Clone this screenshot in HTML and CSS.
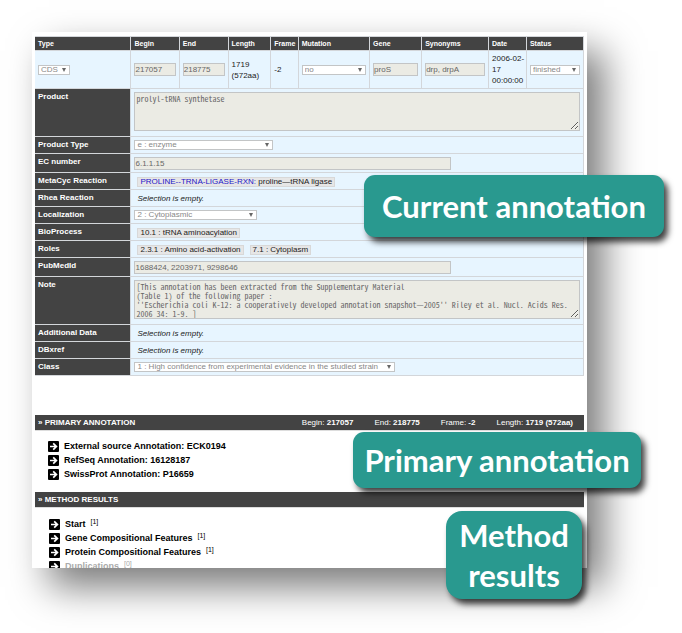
FILE: index.html
```html
<!DOCTYPE html>
<html lang="en">
<head>
<meta charset="utf-8">
<title>Gene annotation</title>
<link rel="stylesheet" href="styles.css">
</head>
<body>
<svg class="defs" aria-hidden="true">
  <symbol id="arrow" viewBox="0 0 11 11">
    <rect width="11" height="11" rx="1" fill="#000"/>
    <path d="M2 5.5H8M5.2 2.4L8.4 5.5L5.2 8.6" fill="none" stroke="#fff" stroke-width="1.7"/>
  </symbol>
</svg>
<div class="stage">
<main class="panel">
  <table class="annotation">
    <colgroup>
      <col class="c-type"><col class="c-begin"><col class="c-end"><col class="c-length"><col class="c-frame">
      <col class="c-mutation"><col class="c-gene"><col class="c-synonyms"><col class="c-date"><col class="c-status">
    </colgroup>
    <thead>
      <tr>
        <th><label for="type">Type</label></th><th><label for="begin">Begin</label></th><th><label for="end">End</label></th><th>Length</th><th>Frame</th>
        <th><label for="mutation">Mutation</label></th><th><label for="gene">Gene</label></th><th><label for="synonyms">Synonyms</label></th><th>Date</th><th><label for="status">Status</label></th>
      </tr>
    </thead>
    <tbody>
      <tr class="summary">
        <td><span class="pick pick-type"><select id="type"><option>CDS</option></select></span></td>
        <td><input id="begin" value="217057"></td>
        <td><input id="end" value="218775"></td>
        <td>1719 (572aa)</td>
        <td>-2</td>
        <td><span class="pick pick-full"><select id="mutation"><option>no</option></select></span></td>
        <td><input id="gene" value="proS"></td>
        <td><input id="synonyms" value="drp, drpA"></td>
        <td class="date">2006-02-17 00:00:00</td>
        <td><span class="pick pick-full"><select id="status"><option>finished</option></select></span></td>
      </tr>
      <tr class="tall"><th><label for="product">Product</label></th><td colspan="9"><textarea id="product">prolyl-tRNA synthetase</textarea></td></tr>
      <tr><th><label for="ptype">Product Type</label></th><td colspan="9"><span class="pick pick-ptype"><select id="ptype"><option>e : enzyme</option></select></span></td></tr>
      <tr class="entry"><th><label for="ec">EC number</label></th><td colspan="9"><input class="wide" id="ec" value="6.1.1.15"></td></tr>
      <tr><th>MetaCyc Reaction</th><td colspan="9"><span class="tag"><a href="#reaction">PROLINE--TRNA-LIGASE-RXN:</a> proline—tRNA ligase</span></td></tr>
      <tr><th>Rhea Reaction</th><td colspan="9"><em>Selection is empty.</em></td></tr>
      <tr><th><label for="loc">Localization</label></th><td colspan="9"><span class="pick pick-loc"><select id="loc"><option>2 : Cytoplasmic</option></select></span></td></tr>
      <tr><th>BioProcess</th><td colspan="9"><span class="tag">10.1 : tRNA aminoacylation</span></td></tr>
      <tr><th>Roles</th><td colspan="9"><span class="tag">2.3.1 : Amino acid-activation</span><span class="tag">7.1 : Cytoplasm</span></td></tr>
      <tr class="entry"><th><label for="pubmed">PubMedId</label></th><td colspan="9"><input class="wide" id="pubmed" value="1688424, 2203971, 9298646"></td></tr>
      <tr class="tall"><th><label for="note">Note</label></th><td colspan="9"><textarea id="note">[This annotation has been extracted from the Supplementary Material
(Table 1) of the following paper :
''Escherichia coli K-12: a cooperatively developed annotation snapshot—2005'' Riley et al. Nucl. Acids Res.
2006 34: 1-9. ]</textarea></td></tr>
      <tr><th>Additional Data</th><td colspan="9"><em>Selection is empty.</em></td></tr>
      <tr><th>DBxref</th><td colspan="9"><em>Selection is empty.</em></td></tr>
      <tr><th><label for="class">Class</label></th><td colspan="9"><span class="pick pick-class"><select id="class"><option>1 : High confidence from experimental evidence in the studied strain</option></select></span></td></tr>
    </tbody>
  </table>

  <section class="primary">
    <header class="bar">
      <h2>» PRIMARY ANNOTATION</h2>
      <p class="facts"><span>Begin: <b>217057</b></span><span>End: <b>218775</b></span><span>Frame: <b>-2</b></span><span>Length: <b>1719 (572aa)</b></span></p>
    </header>
    <ul class="links">
      <li><svg><use href="#arrow"/></svg>External source Annotation: ECK0194</li>
      <li><svg><use href="#arrow"/></svg>RefSeq Annotation: 16128187</li>
      <li><svg><use href="#arrow"/></svg>SwissProt Annotation: P16659</li>
    </ul>
  </section>

  <section class="methods">
    <header class="bar"><h2>» METHOD RESULTS</h2></header>
    <ul class="links">
      <li><svg><use href="#arrow"/></svg>Start <sup>[1]</sup></li>
      <li><svg><use href="#arrow"/></svg>Gene Compositional Features <sup>[1]</sup></li>
      <li><svg><use href="#arrow"/></svg>Protein Compositional Features <sup>[1]</sup></li>
      <li class="none"><svg><use href="#arrow"/></svg>Duplications <sup>[0]</sup></li>
    </ul>
  </section>
</main>
<div class="callout current">Current annotation</div>
<div class="callout first">Primary annotation</div>
<div class="callout results">Method<br>results</div>
</div>
</body>
</html>
```
FILE: styles.css
```css
* { box-sizing: border-box; }

body {
  margin: 0;
  padding: 32px 95px 65px 32px;
  overflow-x: hidden;
  background: #fff;
  color: #222;
  font: 8px/11px "Liberation Sans", Arial, sans-serif;
}

.defs { position: absolute; width: 0; height: 0; }

.stage { position: relative; }

.panel {
  padding: 4px 3px 0;
  background: #fff;
  box-shadow: 17px 19px 36px rgba(0, 0, 0, 0.52);
}

/* Annotation form */
.annotation {
  width: 100%;
  table-layout: fixed;
  border-collapse: collapse;
}

.c-type { width: 17.5%; }
.c-begin { width: 8.8%; }
.c-end { width: 8.9%; }
.c-length { width: 7.8%; }
.c-frame { width: 5%; }
.c-mutation { width: 13%; }
.c-gene { width: 9.5%; }
.c-synonyms { width: 12.2%; }
.c-date { width: 6.9%; }
.c-status { width: 10.4%; }

th, td {
  height: 17px;
  padding: 0 3px;
  border: 1px solid #d3d6da;
  text-align: left;
}

tr > :first-child { border-left: 0; }

th {
  padding-top: 2px;
  background: #434343;
  color: #fff;
  vertical-align: top;
}

td { background: #e7f5ff; vertical-align: middle; }

thead th { height: 14px; padding: 1px 3px; font-size: 7px; }
.summary td { height: 38px; }
.summary .date { padding-right: 0; }
.entry td { height: 19px; }
.tall td { height: 48px; padding-top: 3px; vertical-align: top; }

input, select, textarea {
  display: block;
  width: 100%;
  margin: 0;
  border: 1px solid #c3c5c6;
  border-radius: 0;
  color: #666;
}

input {
  height: 13px;
  padding: 0;
  background: #ebebe4;
  font: 8px/11px "Liberation Sans", Arial, sans-serif;
}

input.wide { width: 71%; }

textarea {
  height: 39px;
  padding: 1px;
  overflow: hidden;
  background: #ebebe4;
  font: 8px/9px "Noto Sans Mono CJK SC", "DejaVu Sans Mono", monospace;
}

select {
  height: 10px;
  padding: 0 2px;
  appearance: none;
  background: #fff;
  color: #888;
  font: 8px/8px "Liberation Sans", Arial, sans-serif;
}

.pick { display: block; position: relative; }

.pick::after {
  content: "";
  position: absolute;
  top: 3px;
  right: 4px;
  border: 2px solid transparent;
  border-top: 4px solid #666;
  border-bottom: 0;
  pointer-events: none;
}

.pick-type { width: 32px; }
.pick-ptype { width: 139px; }
.pick-loc { width: 123px; }
.pick-class { width: 261px; }

em { margin-left: 3px; }

.tag {
  display: inline-block;
  margin: 0 3px;
  padding: 0 2px;
  border: 1px solid #d8d8d8;
  background: #e6e6e6;
  line-height: 8px;
}

.tag a { color: #2416c8; text-decoration: none; }

/* Section bars and link lists */
.bar {
  display: flex;
  justify-content: space-between;
  align-items: center;
  height: 16px;
  padding: 0 11px 0 3px;
  border-bottom: 1px solid #ddd;
  background: #434343;
  color: #fff;
}

.bar h2 { margin: 0; font-size: 8px; }
.facts { display: flex; gap: 21px; margin: 0; }

.primary { margin-top: 39px; }
.methods { margin-top: 11px; }

.links {
  margin: 0;
  padding: 8px 0 0 13px;
  list-style: none;
  color: #000;
  font-size: 9px;
  font-weight: bold;
}

.methods .links {
  height: 60px;
  padding: 9px 0 0 14px;
  overflow: hidden;
}

.links li {
  display: flex;
  align-items: center;
  gap: 5px;
  height: 14px;
}

.links svg { width: 11px; height: 11px; }
.links sup { align-self: flex-start; font-size: 7px; font-weight: normal; line-height: 9px; }
.none { color: #aaa; }

/* Callouts laid over the panel */
.callout {
  position: absolute;
  display: flex;
  align-items: center;
  justify-content: center;
  border-radius: 11px;
  background: #29998f;
  box-shadow: 4px 5px 6px rgba(0, 0, 0, 0.75);
  color: #fff;
  font: bold 31px/40px Lato, sans-serif;
  text-align: center;
  white-space: nowrap;
}

.current { top: 143px; right: -77px; width: 300px; height: 62px; }
.first { top: 400px; right: -54px; width: 288px; height: 56px; }
.results { top: 479px; right: 5px; width: 136px; height: 88px; border-radius: 16px; }
```
